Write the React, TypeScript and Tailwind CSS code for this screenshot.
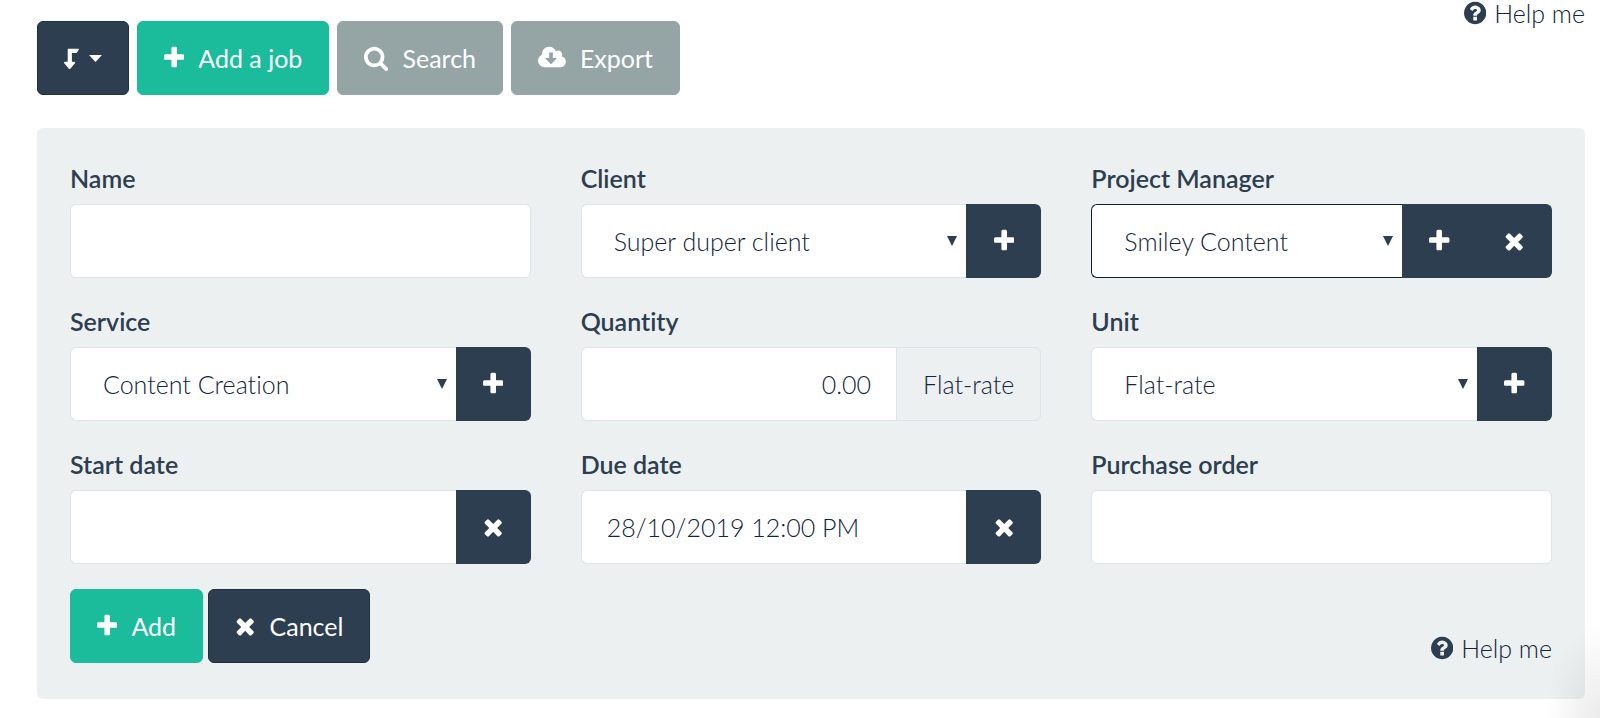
import React from "react";

// Icon outlines, all on a 1792 unit em
const ICONS = {
  plus: {
    viewBox: "192 0 1408 1792",
    d: "M1600 736v192q0 40-28 68t-68 28h-416v416q0 40-28 68t-68 28h-192q-40 0-68-28t-28-68v-416h-416q-40 0-68-28t-28-68v-192q0-40 28-68t68-28h416v-416q0-40 28-68t68-28h192q40 0 68 28t28 68v416h416q40 0 68 28t28 68z",
  },
  times: {
    viewBox: "192 0 1408 1792",
    d: "M1490 1322q0 40-28 68l-136 136q-28 28-68 28t-68-28l-294-294-294 294q-28 28-68 28t-68-28l-136-136q-28-28-28-68t28-68l294-294-294-294q-28-28-28-68t28-68l136-136q28-28 68-28t68 28l294 294 294-294q28-28 68-28t68 28l136 136q28 28 28 68t-28 68l-294 294 294 294q28 28 28 68z",
  },
  search: {
    viewBox: "64 0 1664 1792",
    d: "M1216 832q0-185-131.5-316.5t-316.5-131.5-316.5 131.5-131.5 316.5 131.5 316.5 316.5 131.5 316.5-131.5 131.5-316.5zm512 832q0 52-38 90t-90 38q-54 0-90-38l-343-342q-179 124-399 124-143 0-273.5-55.5t-225-150-150-225-55.5-273.5 55.5-273.5 150-225 225-150 273.5-55.5 273.5 55.5 225 150 150 225 55.5 273.5q0 220-124 399l343 343q37 37 37 90z",
  },
  download: {
    viewBox: "-64 0 1920 1792",
    d: "M1216 928q0-14-9-23t-23-9h-224v-352q0-13-9.5-22.5t-22.5-9.5h-192q-13 0-22.5 9.5t-9.5 22.5v352h-224q-13 0-22.5 9.5t-9.5 22.5q0 14 9 23l352 352q9 9 23 9t23-9l351-351q10-12 10-24zm640 224q0 159-112.5 271.5t-271.5 112.5h-1088q-185 0-316.5-131.5t-131.5-316.5q0-130 70-240t188-165q-2-30-2-43 0-212 150-362t362-150q156 0 285.5 87t188.5 231q71-62 166-62 106 0 181 75t75 181q0 76-41 138 130 31 213.5 135.5t83.5 238.5z",
  },
  question: {
    viewBox: "128 0 1536 1792",
    d: "M1024 1376v-192q0-14-9-23t-23-9h-192q-14 0-23 9t-9 23v192q0 14 9 23t23 9h192q14 0 23-9t9-23zm256-672q0-88-55.5-163t-138.5-116-170-41q-243 0-371 213-15 24 8 42l132 100q7 6 19 6 16 0 25-12 53-68 86-92 34-24 86-24 48 0 85.5 26t37.5 59q0 38-20 61t-68 45q-63 28-115.5 86.5t-52.5 125.5v36q0 14 9 23t23 9h192q14 0 23-9t9-23q0-19 21.5-49.5t54.5-49.5q32-18 49-28.5t46-35 44.5-48 28-60.5 12.5-81zm384 192q0 209-103 385.5t-279.5 279.5-385.5 103-385.5-103-279.5-279.5-103-385.5 103-385.5 279.5-279.5 385.5-103 385.5 103 279.5 279.5 103 385.5z",
  },
  levelDown: {
    viewBox: "0 0 1024 1792",
    d: "M992 256h-704q-32 0-32 32v864h-192q-40 0-58 36-16 37 9 68l320 384q18 22 49 22t49-22l320-384q26-30 9-68-18-36-58-36h-160v-608h320q14 0 25-11l128-224q13-14 4-34-10-19-29-19z",
  },
};

interface IconProps {
  name: keyof typeof ICONS;
}

const Icon: React.FC<IconProps> = ({ name }) => (
  <svg
    className="h-[26px] w-auto shrink-0"
    viewBox={ICONS[name].viewBox}
    fill="currentColor"
    aria-hidden="true"
  >
    <path d={ICONS[name].d} />
  </svg>
);

const COLORS = {
  dark: "bg-[#2c3e50] border-[#1f2f40]",
  green: "bg-[#1abc9c] border-[#1abc9c]",
  gray: "bg-[#95a5a6] border-[#95a5a6]",
};

interface ButtonProps {
  icon: keyof typeof ICONS;
  color: keyof typeof COLORS;
  children: React.ReactNode;
}

const Button: React.FC<ButtonProps> = ({ icon, color, children }) => (
  <button
    type="button"
    className={`flex h-[74px] items-center gap-3.5 rounded-md border px-[26px] text-white ${COLORS[color]}`}
  >
    <Icon name={icon} />
    {children}
  </button>
);

interface AddonButtonProps {
  icon: keyof typeof ICONS;
  label: string;
}

const AddonButton: React.FC<AddonButtonProps> = ({ icon, label }) => (
  <button
    type="button"
    aria-label={label}
    className="flex w-[75px] shrink-0 items-center justify-center bg-[#2c3e50] text-white last:rounded-r-md"
  >
    <Icon name={icon} />
  </button>
);

const HelpLink: React.FC = () => (
  <a
    href="#help"
    className="flex items-center gap-2 leading-[26px] font-light text-[#12263a]"
  >
    <span className="text-[#2c3e50]">
      <Icon name="question" />
    </span>
    Help me
  </a>
);

interface FieldProps {
  id: string;
  label: string;
  value?: string;
  options?: string[];
  numeric?: boolean;
  active?: boolean;
  children?: React.ReactNode;
}

const Field: React.FC<FieldProps> = ({
  id,
  label,
  value = "",
  options,
  numeric,
  active,
  children,
}) => {
  const shape = children ? "rounded-l-md border-r-0" : "rounded-md";
  const border = active ? "border-[#0f1f30]" : "border-[#dce4ec]";

  return (
    <div className="min-w-0">
      <label htmlFor={id} className="mb-[9px] block font-semibold">
        {label}
      </label>
      <div className="flex h-[74px]">
        {options ? (
          <div className="relative min-w-0 flex-1">
            <select
              id={id}
              defaultValue={options[0]}
              className={`size-full appearance-none border bg-white px-8 font-light text-[#12263a] outline-none ${shape} ${border}`}
            >
              {options.map((option) => (
                <option key={option}>{option}</option>
              ))}
            </select>
            <svg
              className="pointer-events-none absolute top-8 right-[9px] h-[10px] w-[10px]"
              viewBox="0 0 10 10"
              fill="currentColor"
              aria-hidden="true"
            >
              <path d="M0 0h10L5 10z" />
            </svg>
          </div>
        ) : (
          <input
            id={id}
            type="text"
            defaultValue={value}
            className={`min-w-0 flex-1 border bg-white px-[25px] font-light text-[#12263a] outline-none ${shape} ${border} ${numeric ? "text-right" : ""}`}
          />
        )}
        {children}
      </div>
    </div>
  );
};

const App: React.FC = () => {
  return (
    <div className="relative bg-white pr-[15px] pb-[19px] pl-[37px] font-['Lato',sans-serif] text-[25px] leading-[33px] text-[#2c3e50] [font-variant-ligatures:none]">
      <header className="flex items-start justify-between">
        <div className="flex gap-2 pt-[21px]">
          <button
            type="button"
            aria-label="Sort order"
            className="flex h-[74px] items-center gap-2.5 rounded-md border border-[#1f2f40] bg-[#2c3e50] px-[26px] text-white"
          >
            <Icon name="levelDown" />
            <svg className="h-[7px] w-[13px]" viewBox="0 0 13 7" fill="currentColor" aria-hidden="true">
              <path d="M0 0h13L6.500 7z" />
            </svg>
          </button>
          <Button icon="plus" color="green">Add a job</Button>
          <Button icon="search" color="gray">Search</Button>
          <Button icon="download" color="gray">Export</Button>
        </div>
        <HelpLink />
      </header>

      <form className="mt-[33px] rounded-md bg-[#ecf0f1] px-[33px] pt-[34px] pb-9">
        <div className="grid grid-cols-3 gap-x-[50px] gap-y-[27px]">
          <Field id="name" label="Name" />
          <Field id="client" label="Client" options={["Super duper client"]}>
            <AddonButton icon="plus" label="Add client" />
          </Field>
          <Field id="manager" label="Project Manager" options={["Smiley Content"]} active>
            <AddonButton icon="plus" label="Add project manager" />
            <AddonButton icon="times" label="Clear project manager" />
          </Field>
          <Field id="service" label="Service" options={["Content Creation"]}>
            <AddonButton icon="plus" label="Add service" />
          </Field>
          <Field id="quantity" label="Quantity" value="0.00" numeric>
            <span className="flex items-center rounded-r-md border border-[#dce4ec] px-[26px] font-light text-[#12263a]">
              Flat-rate
            </span>
          </Field>
          <Field id="unit" label="Unit" options={["Flat-rate"]}>
            <AddonButton icon="plus" label="Add unit" />
          </Field>
          <Field id="start" label="Start date">
            <AddonButton icon="times" label="Clear start date" />
          </Field>
          <Field id="due" label="Due date" value="28/10/2019 12:00 PM">
            <AddonButton icon="times" label="Clear due date" />
          </Field>
          <Field id="order" label="Purchase order" />
        </div>
        <div className="mt-[25px] flex items-end justify-between">
          <div className="flex gap-[5px]">
            <Button icon="plus" color="green">Add</Button>
            <Button icon="times" color="dark">Cancel</Button>
          </div>
          <div className="pb-0.5">
            <HelpLink />
          </div>
        </div>
      </form>
      <div className="pointer-events-none absolute right-0 bottom-0 h-28 w-16 bg-radial-[at_100%_100%] from-black/8 to-transparent to-60%" />
    </div>
  );
};

export default App;
